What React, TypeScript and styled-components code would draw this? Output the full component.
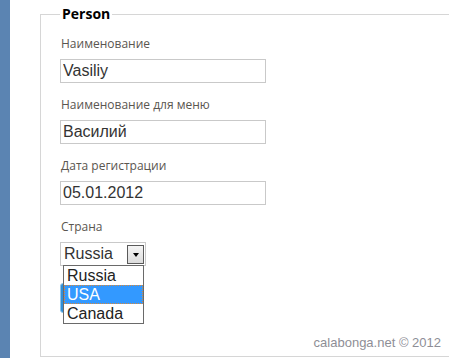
import React from "react";
import styled, { createGlobalStyle } from "styled-components";

const GlobalStyle = createGlobalStyle`
  html, body {
    margin: 0;
    padding: 0;
    background: #ffffff;
    overflow: hidden;
  }
`;

const Page = styled.div`
  display: flex;
  width: 450px;
  height: 358px;
`;

const SideStrip = styled.div`
  width: 10px;
  flex: none;
  background-color: #5b84b2;
`;

const Main = styled.div`
  flex: 1;
  padding: 6px 1px 1px 30px;
  display: flex;
`;

const FieldSet = styled.fieldset`
  flex: 1;
  margin: 0;
  padding: 14px 8px 0 19px;
  border: 1px solid #d6d6d6;
  border-right: none;
  min-width: 0;
`;

const Legend = styled.legend`
  padding: 0 2px;
  font-family: "Open Sans", "Liberation Sans", sans-serif;
  font-weight: 700;
  font-size: 14px;
  line-height: 16px;
  color: #000;
`;

const Body = styled.div`
  display: flex;
  flex-direction: column;
  height: 314px;
`;

const Field = styled.div`
  margin-bottom: 14px;
  position: relative;
`;

const Label = styled.label`
  display: block;
  margin: 0 0 7px 1px;
  font-family: "Open Sans", "Liberation Sans", sans-serif;
  font-size: 12px;
  line-height: 16px;
  color: #5a5650;
`;

const TextBox = styled.input`
  display: block;
  box-sizing: border-box;
  width: 206px;
  height: 24px;
  margin: 0;
  padding: 0 2px;
  border: 1px solid #c9c9c9;
  font-family: "Liberation Sans", Arial, sans-serif;
  font-size: 16px;
  color: #333;
  outline: none;
`;

const SelectBox = styled.div`
  box-sizing: border-box;
  width: 86px;
  height: 24px;
  border: 1px solid #c9c9c9;
  display: flex;
  align-items: center;
  justify-content: space-between;
  padding: 0 1px 0 3px;
  font-family: "Liberation Sans", Arial, sans-serif;
  font-size: 16px;
  color: #333;
`;

const ArrowButton = styled.span`
  box-sizing: border-box;
  width: 17px;
  height: 19px;
  margin-top: 1px;
  border: 1px solid #5a5a5a;
  background: linear-gradient(#f4f4f4, #dcdcdc);
  display: flex;
  align-items: center;
  justify-content: center;
`;

const Triangle = styled.span`
  width: 0;
  height: 0;
  border-left: 3px solid transparent;
  border-right: 3px solid transparent;
  border-top: 4px solid #000;
`;

const SaveButton = styled.button`
  display: block;
  width: 70px;
  height: 30px;
  margin-top: 17px;
  border: 1px solid #8cc4ea;
  border-radius: 3px;
  background: #2f8fd8;
`;

const OptionList = styled.ul`
  position: absolute;
  top: 46px;
  left: 3px;
  box-sizing: border-box;
  width: 81px;
  margin: 0;
  padding: 0;
  list-style: none;
  background: #fff;
  border: 1px solid #6a6a6a;
`;

const Option = styled.li<{ $active?: boolean }>`
  box-sizing: border-box;
  height: 19px;
  padding-left: 2px;
  font-family: "Liberation Sans", Arial, sans-serif;
  font-size: 16px;
  line-height: 18px;
  color: ${(p) => (p.$active ? "#fff" : "#222")};
  background: ${(p) => (p.$active ? "#3399ff" : "#fff")};
  border: 1px dotted ${(p) => (p.$active ? "#d8883a" : "transparent")};
`;

const Footer = styled.div`
  margin-top: auto;
  text-align: right;
  font-family: "Liberation Sans", Arial, sans-serif;
  font-size: 13px;
  line-height: 15px;
  color: #8e8e96;
`;

const countries = ["Russia", "USA", "Canada"];

const App = () => {
  return (
    <>
      <GlobalStyle />
      <Page>
        <SideStrip />
        <Main>
          <FieldSet>
            <Legend>Person</Legend>
            <Body>
              <Field>
                <Label>Наименование</Label>
                <TextBox defaultValue="Vasiliy" />
              </Field>
              <Field>
                <Label>Наименование для меню</Label>
                <TextBox defaultValue="Василий" />
              </Field>
              <Field>
                <Label>Дата регистрации</Label>
                <TextBox defaultValue="05.01.2012" />
              </Field>
              <Field>
                <Label>Страна</Label>
                <SelectBox>
                  <span>Russia</span>
                  <ArrowButton>
                    <Triangle />
                  </ArrowButton>
                </SelectBox>
                <SaveButton aria-label="Сохранить" />
                <OptionList>
                  {countries.map((c) => (
                    <Option key={c} $active={c === "USA"}>
                      {c}
                    </Option>
                  ))}
                </OptionList>
              </Field>
              <Footer>calabonga.net © 2012</Footer>
            </Body>
          </FieldSet>
        </Main>
      </Page>
    </>
  );
};

export default App;
